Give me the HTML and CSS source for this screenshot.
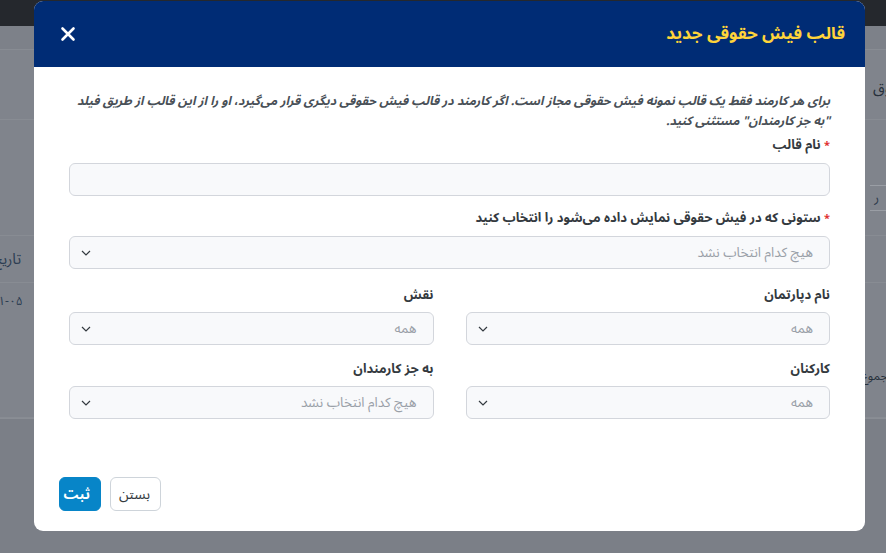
FILE: index.html
```html
<!DOCTYPE html>
<html lang="fa" dir="rtl">
<head>
<meta charset="utf-8">
<title>قالب فیش حقوقی جدید</title>
<link rel="stylesheet" href="styles.css">
</head>
<body>
<div class="page">
  <div class="topbar"></div>
  <div class="panel">
    <div class="prow prow-crumb"></div>
    <div class="prow prow-title"><span class="bg-text">حقوق</span></div>
    <div class="prow prow-filter"><span class="bg-input">ر</span></div>
    <div class="prow prow-head"><span class="bg-text bg-left">تاریخ ایجاد</span></div>
    <div class="prow prow-data"><span class="bg-text bg-left bg-small">۱۴۰۲-۱۱-۰۵</span><span class="bg-text bg-small bg-sum">نمایش مجموع</span></div>
  </div>
</div>

<div class="modal">
  <div class="modal-header">
    <h1 class="modal-title">قالب فیش حقوقی جدید</h1>
    <button class="close-btn" aria-label="بستن">
      <svg width="16" height="16" viewBox="0 0 16 16"><path d="M2.5 2.5 L13.5 13.5 M13.5 2.5 L2.5 13.5" stroke="#fff" stroke-width="2.6" stroke-linecap="round" fill="none"/></svg>
    </button>
  </div>
  <div class="modal-body">
    <p class="note">برای هر کارمند فقط یک قالب نمونه فیش حقوقی مجاز است. اگر کارمند در قالب فیش حقوقی دیگری قرار می‌گیرد، او را از این قالب از طریق فیلد "به جز کارمندان" مستثنی کنید.</p>

    <label class="label label-1"><span class="req">*</span> نام قالب</label>
    <div class="field"></div>

    <label class="label label-2"><span class="req">*</span> ستونی که در فیش حقوقی نمایش داده می‌شود را انتخاب کنید</label>
    <div class="field select"><span class="ph">هیچ کدام انتخاب نشد</span><svg class="chev" width="10" height="6" viewBox="0 0 10 6"><path d="M1 1 L5 5 L9 1" stroke="#343a40" stroke-width="1.2" fill="none"/></svg></div>

    <div class="grid">
      <div class="col">
        <label class="label">نام دپارتمان</label>
        <div class="field select"><span class="ph">همه</span><svg class="chev" width="10" height="6" viewBox="0 0 10 6"><path d="M1 1 L5 5 L9 1" stroke="#343a40" stroke-width="1.2" fill="none"/></svg></div>
      </div>
      <div class="col">
        <label class="label">نقش</label>
        <div class="field select"><span class="ph">همه</span><svg class="chev" width="10" height="6" viewBox="0 0 10 6"><path d="M1 1 L5 5 L9 1" stroke="#343a40" stroke-width="1.2" fill="none"/></svg></div>
      </div>
      <div class="col">
        <label class="label">کارکنان</label>
        <div class="field select"><span class="ph">همه</span><svg class="chev" width="10" height="6" viewBox="0 0 10 6"><path d="M1 1 L5 5 L9 1" stroke="#343a40" stroke-width="1.2" fill="none"/></svg></div>
      </div>
      <div class="col">
        <label class="label">به جز کارمندان</label>
        <div class="field select"><span class="ph">هیچ کدام انتخاب نشد</span><svg class="chev" width="10" height="6" viewBox="0 0 10 6"><path d="M1 1 L5 5 L9 1" stroke="#343a40" stroke-width="1.2" fill="none"/></svg></div>
      </div>
    </div>
  </div>
  <div class="modal-footer">
    <button class="btn btn-light">بستن</button>
    <button class="btn btn-primary">ثبت</button>
  </div>
</div>
</body>
</html>
```

FILE: styles.css
```css
* { box-sizing: border-box; }
html, body { margin: 0; padding: 0; }
body {
  width: 886px;
  height: 553px;
  overflow: hidden;
  background: #7b7f87;
  font-family: "Noto Sans Arabic", "DejaVu Sans", sans-serif;
  position: relative;
}

/* dimmed page behind the modal */
.page { display: flex; flex-direction: column; }
.topbar {
  height: 26px;
  background: #25282d;
}
.panel {
  background: #80848c;
  border-bottom: 1px solid #8a8e95;
  display: flex;
  flex-direction: column;
}
.prow {
  border-bottom: 1px solid #888c93;
  display: flex;
  align-items: center;
  justify-content: space-between;
  overflow: hidden;
}
.prow-crumb { height: 24px; background: #7d8189; }
.prow-title { height: 70px; padding-top: 6px; }
.prow-filter { height: 116px; padding-top: 40px; }
.prow-head { height: 47px; }
.prow-data {
  height: 135px;
  flex-direction: column;
  align-items: stretch;
  justify-content: flex-start;
  padding-top: 6px;
}
.bg-text {
  font-size: 15px;
  color: #27303b;
  margin-right: -22px;
  white-space: nowrap;
}
.bg-left { margin-right: auto; margin-left: -40px; color: #2c3d52; }
.bg-small { font-size: 12px; }
.prow-data .bg-left { align-self: flex-end; }
.bg-sum { align-self: flex-start; margin-top: 50px; margin-right: -44px; }
.bg-input {
  width: 30px;
  height: 26px;
  border: 1px solid #9a9ea5;
  border-left: none;
  margin-right: -14px;
  font-size: 13px;
  color: #2c3a4a;
  display: flex;
  align-items: center;
  padding-right: 20px;
}

/* modal */
.modal {
  position: absolute;
  top: 1px;
  left: 34px;
  width: 831px;
  height: 530px;
  background: #fff;
  border-radius: 9px;
  overflow: hidden;
  display: flex;
  flex-direction: column;
}
.modal-header {
  height: 66px;
  background: #002c75;
  display: flex;
  align-items: center;
  justify-content: space-between;
  padding: 0 20px 0 26px;
  flex-shrink: 0;
}
.modal-title {
  margin: 0;
  font-size: 17px;
  font-weight: 700;
  color: #ffd43a;
}
.close-btn {
  background: none;
  border: none;
  padding: 0;
  width: 16px;
  height: 16px;
  display: flex;
}
.modal-body {
  padding: 24px 35px 0 35px;
  flex: 1;
}
.note {
  margin: 0 0 0 -10px;
  font-size: 12.3px;
  line-height: 20px;
  font-weight: 700;
  font-style: italic;
  color: #495057;
}
.label {
  display: block;
  margin-top: 4px;
  margin-bottom: 7px;
  font-size: 13px;
  line-height: 20px;
  font-weight: 700;
  color: #343a40;
}
.label-2 { margin-top: 12px; margin-bottom: 7px; }
.req { color: #e03131; font-size: 11px; }
.field {
  height: 33px;
  border: 1px solid #d3d6dc;
  border-radius: 6px;
  background: #f8f9fb;
}
.select {
  display: flex;
  align-items: center;
  justify-content: space-between;
  padding: 0 16px 0 11px;
}
.ph {
  font-size: 13.5px;
  color: #9aa0a8;
}
.chev { flex-shrink: 0; }
.grid {
  display: grid;
  grid-template-columns: 1fr 1fr;
  column-gap: 32px;
  margin-top: 16px;
}
.grid .label { margin-top: 0; margin-bottom: 7px; }
.grid .col:nth-child(n+3) .label { margin-top: 14px; }
.modal-footer {
  display: flex;
  justify-content: flex-end;
  gap: 9px;
  padding: 0 25px 20px;
}
.btn {
  height: 34px;
  border-radius: 6px;
  font-family: inherit;
  font-size: 14px;
  padding: 0 10px;
}
.btn-light {
  background: #fff;
  border: 1px solid #ced4da;
  color: #343a40;
  width: 51px;
}
.btn-primary {
  background: #0785c8;
  border: 1px solid #0785c8;
  color: #fff;
  font-weight: 700;
  width: 42px;
}
```
